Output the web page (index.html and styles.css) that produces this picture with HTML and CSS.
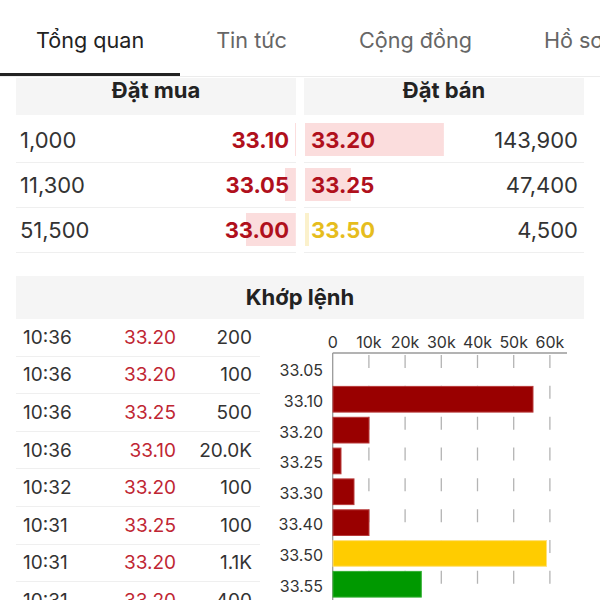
FILE: index.html
```html
<!DOCTYPE html>
<html lang="vi">
  <head>
    <meta charset="UTF-8" />
    <meta name="viewport" content="width=device-width, initial-scale=1.0" />
    <title>Tổng quan</title>
    <link rel="stylesheet" href="styles.css">
  </head>
  <body>
    <nav class="tabs">
      <a href="#" class="tab active">Tổng quan</a>
      <a href="#" class="tab">Tin tức</a>
      <a href="#" class="tab">Cộng đồng</a>
      <a href="#" class="tab">Hồ sơ</a>
    </nav>

    <main class="content">
      <section class="book">
        <div class="side bid">
          <div class="side-head">Đặt mua</div>
          <div class="book-row" style="--w: 0.35%"><span class="qty">1,000</span><span class="price">33.10</span></div>
          <div class="book-row" style="--w: 3.9%"><span class="qty">11,300</span><span class="price">33.05</span></div>
          <div class="book-row" style="--w: 17.8%"><span class="qty">51,500</span><span class="price">33.00</span></div>
        </div>
        <div class="side ask">
          <div class="side-head">Đặt bán</div>
          <div class="book-row" style="--w: 49.6%"><span class="price">33.20</span><span class="qty">143,900</span></div>
          <div class="book-row" style="--w: 16.4%"><span class="price">33.25</span><span class="qty">47,400</span></div>
          <div class="book-row ref" style="--w: 1.55%"><span class="price">33.50</span><span class="qty">4,500</span></div>
        </div>
      </section>

      <section class="match">
        <div class="match-head">Khớp lệnh</div>
        <div class="match-body">
          <div class="trades">
            <div class="trade"><span>10:36</span><span class="t-price">33.20</span><span class="t-vol">200</span></div>
            <div class="trade"><span>10:36</span><span class="t-price">33.20</span><span class="t-vol">100</span></div>
            <div class="trade"><span>10:36</span><span class="t-price">33.25</span><span class="t-vol">500</span></div>
            <div class="trade"><span>10:36</span><span class="t-price">33.10</span><span class="t-vol">20.0K</span></div>
            <div class="trade"><span>10:32</span><span class="t-price">33.20</span><span class="t-vol">100</span></div>
            <div class="trade"><span>10:31</span><span class="t-price">33.25</span><span class="t-vol">100</span></div>
            <div class="trade"><span>10:31</span><span class="t-price">33.20</span><span class="t-vol">1.1K</span></div>
            <div class="trade"><span>10:31</span><span class="t-price">33.20</span><span class="t-vol">400</span></div>
          </div>

          <svg class="chart" width="324" height="290" viewBox="0 0 324 290">
            <g class="ticks">
              <text x="72.7" y="29">0</text>
              <text x="108.9" y="29">10k</text>
              <text x="145.1" y="29">20k</text>
              <text x="181.3" y="29">30k</text>
              <text x="217.5" y="29">40k</text>
              <text x="253.7" y="29">50k</text>
              <text x="289.9" y="29">60k</text>
            </g>
            <g class="grid">
              <line x1="108.9" y1="36" x2="108.9" y2="290" />
              <line x1="145.1" y1="36" x2="145.1" y2="290" />
              <line x1="181.3" y1="36" x2="181.3" y2="290" />
              <line x1="217.5" y1="36" x2="217.5" y2="290" />
              <line x1="253.7" y1="36" x2="253.7" y2="290" />
              <line x1="289.9" y1="36" x2="289.9" y2="290" />
            </g>
            <line class="axis" x1="72.7" y1="34" x2="307" y2="34" />
            <line class="axis" x1="72.7" y1="34" x2="72.7" y2="290" />
            <g class="labels">
              <text x="63" y="57">33.05</text>
              <text x="63" y="88">33.10</text>
              <text x="63" y="119">33.20</text>
              <text x="63" y="149">33.25</text>
              <text x="63" y="180">33.30</text>
              <text x="63" y="211">33.40</text>
              <text x="63" y="242">33.50</text>
              <text x="63" y="273">33.55</text>
            </g>
            <rect class="bar red" x="73" y="67.4" width="200" height="25.7" />
            <rect class="bar red" x="73" y="98.3" width="36" height="25.7" />
            <rect class="bar red" x="73" y="129.1" width="8" height="25.7" />
            <rect class="bar red" x="73" y="159.9" width="21" height="25.7" />
            <rect class="bar red" x="73" y="190.8" width="36" height="25.7" />
            <rect class="bar yellow" x="73" y="221.6" width="213.5" height="25.7" />
            <rect class="bar green" x="73" y="252.4" width="88.3" height="25.7" />
          </svg>
        </div>
      </section>
    </main>
  </body>
</html>
```

FILE: styles.css
```css
* {
  box-sizing: border-box;
}
body {
  margin: 0;
  font-family: Inter, "Noto Sans", sans-serif;
  color: #2b2b2b;
  background-color: #ffffff;
  overflow: hidden;
}
.tabs {
  display: flex;
  white-space: nowrap;
  overflow: hidden;
  border-bottom: 1px solid #ececec;
}
.tab {
  flex: none;
  padding: 7px 36px 0;
  line-height: 66px;
  font-size: 21.6px;
  color: #666;
  text-decoration: none;
  border-bottom: 3px solid transparent;
}
.tab.active {
  color: #222;
  border-bottom-color: #222;
}
.content {
  padding: 1px 16px 0;
}
.book {
  display: grid;
  grid-template-columns: 1fr 1fr;
  gap: 8px;
}
.side-head,
.match-head {
  background-color: #f5f5f5;
  text-align: center;
  font-weight: bold;
  font-size: 22px;
  color: #222;
}
.side-head {
  height: 37px;
  line-height: 25px;
  padding-bottom: 12px;
  margin-bottom: 3px;
}
.book-row {
  display: flex;
  justify-content: space-between;
  align-items: center;
  height: 45px;
  border-bottom: 1px solid #efefef;
  font-size: 22px;
  background-repeat: no-repeat;
  background-size: var(--w) 33px;
}
.bid .book-row {
  padding: 0 7px 0 4px;
  background-image: linear-gradient(#fbdddd, #fbdddd);
  background-position: right 0 top 5px;
}
.ask .book-row {
  padding: 0 6px 0 7px;
  background-image: linear-gradient(#fbdddd, #fbdddd);
  background-position: left 1px top 5px;
}
.ask .book-row.ref {
  background-image: linear-gradient(#fbf1cc, #fbf1cc);
}
.qty {
  color: #333;
}
.price {
  font-weight: bold;
  color: #b0101c;
}
.ref .price {
  color: #e6bd1e;
}
.match {
  margin-top: 23px;
}
.match-head {
  height: 43px;
  line-height: 43px;
}
.match-body {
  display: flex;
}
.trades {
  width: 244px;
  flex: none;
}
.trade {
  display: grid;
  grid-template-columns: 1fr 80px 76px;
  align-items: center;
  height: 37.6px;
  padding: 0 8px 0 7px;
  border-bottom: 1px solid #efefef;
  font-size: 19px;
  color: #333;
}
.t-price,
.t-vol {
  text-align: right;
}
.t-price {
  color: #bf2633;
}
.chart {
  flex: none;
  display: block;
}
.chart text {
  font-family: Inter, "Noto Sans", sans-serif;
  font-size: 16px;
  fill: #333;
}
.ticks text {
  text-anchor: middle;
}
.labels text {
  text-anchor: end;
}
.grid line {
  stroke: #b4b4b4;
  stroke-width: 1.3;
  stroke-dasharray: 13 17.83;
}
.axis {
  stroke: #9a9a9a;
  stroke-width: 1.3;
}
.bar {
  stroke-width: 1;
}
.bar.red {
  fill: #990000;
  stroke: #b83a3a;
}
.bar.yellow {
  fill: #ffcc00;
  stroke: #ffe17a;
}
.bar.green {
  fill: #009900;
  stroke: #33b033;
}
```
